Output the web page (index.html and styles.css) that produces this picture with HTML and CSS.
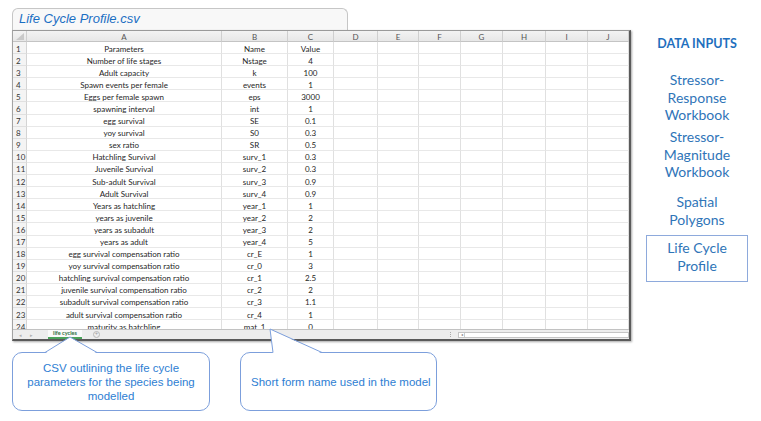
FILE: index.html
```html
<!DOCTYPE html>
<html>
<head>
<meta charset="utf-8">
<link rel="stylesheet" href="styles.css">
</head>
<body>
<div class="page">
  <div class="left">
    <div class="tab">Life Cycle Profile.csv</div>
    <div class="sheet">
      <div class="grid">
        <div class="row head"><span class="corner"></span><span>A</span><span>B</span><span>C</span><span>D</span><span>E</span><span>F</span><span>G</span><span>H</span><span>I</span><span>J</span></div>
        <div class="row"><b>1</b><span>Parameters</span><span>Name</span><span>Value</span><i></i><i></i><i></i><i></i><i></i><i></i><i></i></div>
        <div class="row"><b>2</b><span>Number of life stages</span><span>Nstage</span><span>4</span><i></i><i></i><i></i><i></i><i></i><i></i><i></i></div>
        <div class="row"><b>3</b><span>Adult capacity</span><span>k</span><span>100</span><i></i><i></i><i></i><i></i><i></i><i></i><i></i></div>
        <div class="row"><b>4</b><span>Spawn events per female</span><span>events</span><span>1</span><i></i><i></i><i></i><i></i><i></i><i></i><i></i></div>
        <div class="row"><b>5</b><span>Eggs per female spawn</span><span>eps</span><span>3000</span><i></i><i></i><i></i><i></i><i></i><i></i><i></i></div>
        <div class="row"><b>6</b><span>spawning interval</span><span>int</span><span>1</span><i></i><i></i><i></i><i></i><i></i><i></i><i></i></div>
        <div class="row"><b>7</b><span>egg survival</span><span>SE</span><span>0.1</span><i></i><i></i><i></i><i></i><i></i><i></i><i></i></div>
        <div class="row"><b>8</b><span>yoy survival</span><span>S0</span><span>0.3</span><i></i><i></i><i></i><i></i><i></i><i></i><i></i></div>
        <div class="row"><b>9</b><span>sex ratio</span><span>SR</span><span>0.5</span><i></i><i></i><i></i><i></i><i></i><i></i><i></i></div>
        <div class="row"><b>10</b><span>Hatchling Survival</span><span>surv_1</span><span>0.3</span><i></i><i></i><i></i><i></i><i></i><i></i><i></i></div>
        <div class="row"><b>11</b><span>Juvenile Survival</span><span>surv_2</span><span>0.3</span><i></i><i></i><i></i><i></i><i></i><i></i><i></i></div>
        <div class="row"><b>12</b><span>Sub-adult Survival</span><span>surv_3</span><span>0.9</span><i></i><i></i><i></i><i></i><i></i><i></i><i></i></div>
        <div class="row"><b>13</b><span>Adult Survival</span><span>surv_4</span><span>0.9</span><i></i><i></i><i></i><i></i><i></i><i></i><i></i></div>
        <div class="row"><b>14</b><span>Years as hatchling</span><span>year_1</span><span>1</span><i></i><i></i><i></i><i></i><i></i><i></i><i></i></div>
        <div class="row"><b>15</b><span>years as juvenile</span><span>year_2</span><span>2</span><i></i><i></i><i></i><i></i><i></i><i></i><i></i></div>
        <div class="row"><b>16</b><span>years as subadult</span><span>year_3</span><span>2</span><i></i><i></i><i></i><i></i><i></i><i></i><i></i></div>
        <div class="row"><b>17</b><span>years as adult</span><span>year_4</span><span>5</span><i></i><i></i><i></i><i></i><i></i><i></i><i></i></div>
        <div class="row"><b>18</b><span>egg survival compensation ratio</span><span>cr_E</span><span>1</span><i></i><i></i><i></i><i></i><i></i><i></i><i></i></div>
        <div class="row"><b>19</b><span>yoy survival compensation ratio</span><span>cr_0</span><span>3</span><i></i><i></i><i></i><i></i><i></i><i></i><i></i></div>
        <div class="row"><b>20</b><span>hatchling survival compensation ratio</span><span>cr_1</span><span>2.5</span><i></i><i></i><i></i><i></i><i></i><i></i><i></i></div>
        <div class="row"><b>21</b><span>juvenile survival compensation ratio</span><span>cr_2</span><span>2</span><i></i><i></i><i></i><i></i><i></i><i></i><i></i></div>
        <div class="row"><b>22</b><span>subadult survival compensation ratio</span><span>cr_3</span><span>1.1</span><i></i><i></i><i></i><i></i><i></i><i></i><i></i></div>
        <div class="row"><b>23</b><span>adult survival compensation ratio</span><span>cr_4</span><span>1</span><i></i><i></i><i></i><i></i><i></i><i></i><i></i></div>
        <div class="row"><b>24</b><span>maturity as hatchling</span><span>mat_1</span><span>0</span><i></i><i></i><i></i><i></i><i></i><i></i><i></i></div>
      </div>
      <div class="bar">
        <span class="nav">&#9666;</span><span class="nav">&#9656;</span>
        <span class="sheettab">life cycles</span>
        <span class="plus">+</span>
        <span class="sep"></span>
        <span class="scroll"><span class="sarrow">&#9666;</span></span>
      </div>
    </div>
    <div class="callouts">
      <div class="callout c1">
        <svg class="ptr" width="1" height="1"><polygon points="33,1.4 58,-15 85,1.4" fill="#fff"/><polyline points="33,0.5 58,-15 85,0.5" fill="none" stroke="#7c9fdc" stroke-width="1"/></svg>
        <p>CSV outlining the life cycle parameters for the species being modelled</p>
      </div>
      <div class="callout c2">
        <svg class="ptr" width="1" height="1"><polygon points="33,1.4 30,-23 82,1.4" fill="#fff"/><polyline points="33,0.5 30,-23 82,0.5" fill="none" stroke="#7c9fdc" stroke-width="1"/></svg>
        <p>Short form name used in the model</p>
      </div>
    </div>
  </div>
  <div class="panel">
    <div class="ptitle">DATA INPUTS</div>
    <div class="item i1">Stressor-<br>Response<br>Workbook</div>
    <div class="item i2">Stressor-<br>Magnitude<br>Workbook</div>
    <div class="item i3">Spatial<br>Polygons</div>
    <div class="item i4">Life Cycle<br>Profile</div>
  </div>
</div>
</body>
</html>
```
FILE: styles.css
```css
html, body {
  margin: 0;
  background: #fff;
}
body {
  font-family: Lato, "Open Sans", sans-serif;
}
.page {
  width: 761px;
  height: 421px;
  box-sizing: border-box;
  padding: 8px 0 0 12px;
  display: flex;
  align-items: flex-start;
}
.left {
  width: 619px;
  display: flex;
  flex-direction: column;
}
.tab {
  width: 336px;
  height: 22px;
  box-sizing: border-box;
  border: 1px solid #c6c6c6;
  border-bottom: none;
  border-radius: 6px 6px 0 0;
  background: #f8f8f8;
  padding-left: 6px;
  font: italic 13px/20px "Liberation Sans", Arial, sans-serif;
  color: #1b6fc3;
}
.sheet {
  border-left: 1px solid #a3a3a3;
  border-top: 1px solid #9a9a9a;
  border-right: 2px solid #5a5a5a;
  border-bottom: 2px solid #5a5a5a;
  box-shadow: 1px 1px 2px rgba(0,0,0,0.35);
  background: #fff;
}
.grid {
  height: 298px;
  overflow: hidden;
}
.row {
  display: grid;
  grid-template-columns: 14px 195px 66px 46px 44px 41px 42px 42px 43px 42px 41px;
  height: 12.1px;
  font-size: 8px;
  line-height: 11px;
  color: #262626;
}
.row > * {
  box-sizing: border-box;
  padding-top: 1.5px;
  border-right: 1px solid #e0e0e0;
  border-bottom: 1px solid #e8e8e8;
  text-align: center;
  white-space: nowrap;
  overflow: hidden;
  font-style: normal;
}
.row > b {
  font-weight: normal;
  text-align: left;
  padding-left: 3px;
  background: #f4f4f4;
  border-right: 1px solid #d4d4d4;
  border-bottom: 1px solid #e0e0e0;
  color: #333;
}
.row.head {
  height: 11px;
  line-height: 10px;
  background: linear-gradient(#f3f3f3, #e6e6e6);
  color: #555;
}
.row.head > * {
  padding-top: 0.5px;
  border-right: 1px solid #cfcfcf;
  border-bottom: 1px solid #c4c4c4;
}
.corner {
  position: relative;
}
.corner::after {
  content: "";
  position: absolute;
  right: 2px;
  bottom: 1px;
  border-left: 8px solid transparent;
  border-bottom: 7px solid #c9c9c9;
}
.bar {
  height: 10px;
  box-sizing: border-box;
  border-top: 1px solid #c2c2c2;
  background: #ededed;
  display: flex;
  align-items: center;
  font-size: 5px;
  color: #b0b0b0;
}
.nav {
  margin-left: 6px;
  width: 6px;
}
.nav + .nav {
  margin-left: 5px;
}
.sheettab {
  margin-left: 12px;
  width: 34px;
  height: 9px;
  box-sizing: border-box;
  border-bottom: 2px solid #4aa35a;
  background: #fafafa;
  text-align: center;
  font-size: 5.5px;
  line-height: 7px;
  font-weight: bold;
  color: #2e6e3c;
}
.plus {
  margin-left: 11px;
  width: 5px;
  height: 5px;
  border: 1px solid #b8b8b8;
  border-radius: 50%;
  font-size: 5px;
  line-height: 5px;
  text-align: center;
  color: #999;
}
.sep {
  margin-left: 350px;
  width: 1px;
  height: 5px;
  border-left: 1px dotted #aaa;
}
.scroll {
  margin-left: 6px;
  flex: 1;
  height: 6px;
  box-sizing: border-box;
  border: 1px solid #c4c4c4;
  background: #fff;
  font-size: 4px;
  line-height: 4px;
  color: #777;
}
.sarrow {
  display: inline-block;
  width: 5px;
  border-right: 1px solid #ccc;
  text-align: center;
}
.callouts {
  display: flex;
  gap: 30px;
  margin-top: 11px;
}
.callout {
  position: relative;
  height: 59px;
  box-sizing: border-box;
  border: 1px solid #7c9fdc;
  border-radius: 10px;
  background: #fff;
  display: flex;
  align-items: center;
  justify-content: center;
  font-family: "Liberation Sans", Arial, sans-serif;
  color: #2e7ed3;
}
.c1 {
  width: 198px;
}
.c2 {
  width: 197px;
}
.callout p {
  margin: 0;
  text-align: center;
  font-size: 11.5px;
  line-height: 14px;
}
.c1 p {
  padding: 0 8px;
}
.c2 p {
  text-align: left;
  width: 100%;
  padding-left: 10px;
}
.ptr {
  position: absolute;
  left: -1px;
  top: -1px;
  overflow: visible;
}
.panel {
  margin-left: 15px;
  width: 102px;
  padding-top: 27.5px;
  text-align: center;
  color: #2f75b8;
}
.ptitle {
  font-size: 12.5px;
  line-height: 15px;
  font-weight: bold;
  color: #1f6fbe;
}
.item {
  font-size: 14px;
  line-height: 17.5px;
}
.i1 { margin-top: 20.75px; }
.i2 { margin-top: 4.5px; }
.i3 { margin-top: 12.5px; }
.i4 {
  margin-top: 6.75px;
  border: 1px solid #8eaadc;
  padding: 3.25px 0 6.25px;
}
```
